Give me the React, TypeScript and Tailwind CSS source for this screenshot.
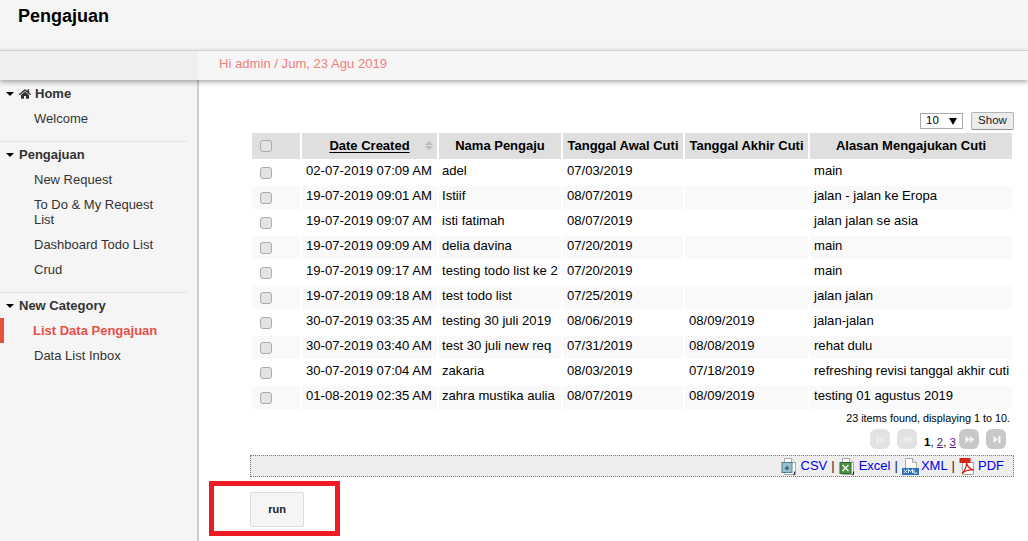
import { FaHome } from "react-icons/fa";

const rows = [
  ["02-07-2019 07:09 AM", "adel", "07/03/2019", "", "main"],
  ["19-07-2019 09:01 AM", "Istiif", "08/07/2019", "", "jalan - jalan ke Eropa"],
  ["19-07-2019 09:07 AM", "isti fatimah", "08/07/2019", "", "jalan jalan se asia"],
  ["19-07-2019 09:09 AM", "delia davina", "07/20/2019", "", "main"],
  ["19-07-2019 09:17 AM", "testing todo list ke 2", "07/20/2019", "", "main"],
  ["19-07-2019 09:18 AM", "test todo list", "07/25/2019", "", "jalan jalan"],
  ["30-07-2019 03:35 AM", "testing 30 juli 2019", "08/06/2019", "08/09/2019", "jalan-jalan"],
  ["30-07-2019 03:40 AM", "test 30 juli new req", "07/31/2019", "08/08/2019", "rehat dulu"],
  ["30-07-2019 07:04 AM", "zakaria", "08/03/2019", "07/18/2019", "refreshing revisi tanggal akhir cuti"],
  ["01-08-2019 02:35 AM", "zahra mustika aulia", "08/07/2019", "08/09/2019", "testing 01 agustus 2019"],
];

function Caret() {
  return <span className="mr-[5px] h-0 w-0 border-x-[4px] border-t-[4px] border-x-transparent border-t-black" />;
}

function NavGroup({ title, icon, children }: { title: string; icon?: boolean; children: React.ReactNode }) {
  return (
    <div>
      <div className="flex h-[25px] items-center pl-[6px] text-[#333]">
        <Caret />
        {icon && <FaHome className="mr-[4px] text-[12px] text-[#333]" />}
        <span className="text-[13px] font-bold">{title}</span>
      </div>
      {children}
    </div>
  );
}

function NavItem({ label, active }: { label: string; active?: boolean }) {
  return (
    <div className={`flex min-h-[25px] items-center py-[5px] pr-[28px] leading-[15px] ${active ? "border-l-4 border-[#e2513c] pl-[29px] font-bold text-[#e8504a]" : "pl-[34px] text-[#333]"}`}>
      {label}
    </div>
  );
}

function Checkbox() {
  return <span className="ml-[8px] block h-[12px] w-[12px] rounded-[3px] border border-[#ababab] bg-[#e4e4e4]" />;
}

function PageButton({ dir, double, dim }: { dir: "l" | "r"; double?: boolean; dim?: boolean }) {
  const tri = dir === "l" ? "M8 4 3 8l5 4z" : "M4 4l5 4-5 4z";
  const tri2 = dir === "l" ? "M13 4 8 8l5 4z" : "M9 4l5 4-5 4z";
  const bar = dir === "l" ? "M4 4h2.5v8H4z" : "M10.5 4H13v8h-2.5z";
  return (
    <span className={`flex h-[20px] w-[20px] items-center justify-center rounded-[6px] ${dim ? "bg-[#e2e2e2]" : "bg-[#c8c8c8]"}`}>
      <svg viewBox="0 0 17 16" className="h-[15px] w-[15px]" fill={dim ? "#eeeeee" : "#f6f6f6"}>
        {double ? (
          <>
            <path d={tri} />
            <path d={tri2} />
          </>
        ) : (
          <>
            <path d={dir === "l" ? "M12 4 7 8l5 4z" : "M5 4l5 4-5 4z"} />
            <path d={bar} />
          </>
        )}
      </svg>
    </span>
  );
}

function FileIcon({ kind }: { kind: "csv" | "xls" | "xml" | "pdf" }) {
  return (
    <svg viewBox="0 0 17 19" className="h-[19px] w-[17px] shrink-0">
      <path d="M3.5 1.5h7l4 4v12h-11z" fill="#fff" stroke="#a8a8a8" />
      <path d="M10.5 1.5v4h4" fill="#eee" stroke="#a8a8a8" />
      {kind === "csv" && (
        <>
          <rect x="1" y="5.5" width="10" height="10" fill="#9cc0cc" stroke="#4f8296" />
          <path d="M3.5 11.5 6 8.5l2.5 3-2.5 2z" fill="#3f7488" />
          <path d="M13.5 14.5v2.5l-1 1" stroke="#333" fill="none" strokeWidth="1.2" />
        </>
      )}
      {kind === "xls" && (
        <>
          <rect x="1" y="5.5" width="11" height="11" fill="#4d8f47" stroke="#2f6a2d" />
          <path d="m3.5 8 6 6M9.5 8l-6 6" stroke="#eaf4e6" strokeWidth="1.5" />
          <path d="M14.5 14.5v2.5l-1 1" stroke="#333" fill="none" strokeWidth="1.2" />
        </>
      )}
      {kind === "xml" && (
        <>
          <rect x="0" y="11" width="17" height="7" fill="#2f74c4" />
          <path d="M2 12.5l3 3.5M5 12.5l-3 3.5M6.5 16v-3.5l2 2 2-2V16M12 12.5V16h3" stroke="#fff" strokeWidth="0.9" fill="none" />
        </>
      )}
      {kind === "pdf" && (
        <>
          <rect x="0.5" y="1" width="11" height="5" fill="#d4261c" />
          <path d="M3 16.5c3-3 4.5-7 4.5-10.5 1 3.5 3 6 7 7-4-.5-8 .5-11.5 3.5z" fill="none" stroke="#d4261c" strokeWidth="1.3" />
        </>
      )}
    </svg>
  );
}

function ExportLink({ kind, label, gap }: { kind: "csv" | "xls" | "xml" | "pdf"; label: string; gap: string }) {
  return (
    <span className={`flex items-center text-[#0000ee] ${gap}`}>
      <FileIcon kind={kind} />
      {label}
    </span>
  );
}

export default function App() {
  return (
    <div className="relative flex h-[541px] w-[1028px] flex-col overflow-hidden bg-white font-['Liberation_Sans',Arial,sans-serif] text-[13px] text-black">
      <header className="h-[50px] bg-[#f5f5f5] pl-[18px] pt-[6px] text-[18px] leading-[21px] font-bold">Pengajuan</header>

      <div className="z-10 flex h-[30px] border-t border-[#d2d2d2] shadow-[0_2px_5px_rgba(0,0,0,0.35)]">
        <div className="w-[198px] bg-[#efefef]" />
        <div className="flex-1 bg-[#f6f6f6] pl-[21px] text-[13.1px] leading-[25px] text-[#f08080]">Hi admin / Jum, 23 Agu 2019</div>
      </div>

      <div className="flex min-h-0 flex-1">
        <aside className="w-[199px] shrink-0 border-r-2 border-[#cfcfcf] bg-[#f5f5f5] pt-[1px]">
          <NavGroup title="Home" icon>
            <NavItem label="Welcome" />
          </NavGroup>
          <div className="mt-[10px] w-[187px] border-t border-[#e4e4e4]" />
          <NavGroup title="Pengajuan">
            <NavItem label="New Request" />
            <NavItem label="To Do & My Request List" />
            <NavItem label="Dashboard Todo List" />
            <NavItem label="Crud" />
          </NavGroup>
          <div className="mt-[10px] w-[187px] border-t border-[#e4e4e4]" />
          <NavGroup title="New Category">
            <NavItem label="List Data Pengajuan" active />
            <NavItem label="Data List Inbox" />
          </NavGroup>
        </aside>

        <main className="min-w-0 flex-1 pl-[51px] pr-[14px] pt-[31px]">
          <div className="flex h-[20px] items-center justify-end gap-2 text-[11.5px]">
            <span className="flex h-[16px] w-[43px] items-center justify-between border border-[#a9a9a9] px-[5px]">
              10
              <span className="h-0 w-0 border-x-[4px] border-t-[7px] border-x-transparent border-t-black" />
            </span>
            <span className="flex h-[18px] w-[43px] items-center justify-center rounded-[2px] border border-[#b5b5b5] border-b-[#8f8f8f] bg-[#ececec] text-[#222]">Show</span>
          </div>

          <table className="w-[764px] table-fixed border-separate border-spacing-[2px]">
            <colgroup>
              <col className="w-[48px]" />
              <col className="w-[135px]" />
              <col className="w-[122px]" />
              <col className="w-[120px]" />
              <col className="w-[123px]" />
              <col />
            </colgroup>
            <thead>
              <tr className="h-[26px] bg-[#dfdfdf] text-center">
                <th><Checkbox /></th>
                <th className="relative font-bold underline underline-offset-2">
                  Date Created
                  <span className="absolute top-[8px] right-[4px] flex flex-col gap-[1px]">
                    <span className="h-0 w-0 border-x-[4px] border-b-[4px] border-x-transparent border-b-[#bcbcbc]" />
                    <span className="h-0 w-0 border-x-[4px] border-t-[4px] border-x-transparent border-t-[#bcbcbc]" />
                  </span>
                </th>
                <th className="font-bold">Nama Pengaju</th>
                <th className="font-bold">Tanggal Awal Cuti</th>
                <th className="font-bold">Tanggal Akhir Cuti</th>
                <th className="font-bold">Alasan Mengajukan Cuti</th>
              </tr>
            </thead>
            <tbody>
              {rows.map((r, i) => (
                <tr key={i} className="h-[23px]">
                  <td className={i % 2 ? "bg-[#f9f9f9]" : ""}><Checkbox /></td>
                  {r.map((c, j) => (
                    <td key={j} className={`overflow-visible whitespace-nowrap pb-[3px] text-[13.1px] leading-[16px] ${j === 1 ? "pl-[3px]" : "pl-[4px]"} ${i % 2 ? "bg-[#f9f9f9]" : ""}`}>{c}</td>
                  ))}
                </tr>
              ))}
            </tbody>
          </table>

          <div className="pr-[4px] text-right text-[10.8px] leading-[15px]">23 items found, displaying 1 to 10.</div>
          <div className="mt-[3px] flex h-[20px] items-start justify-end gap-[3px] pr-[8px] text-[11.5px]">
            <PageButton dir="l" dim />
            <span className="ml-[4px]"><PageButton dir="l" double dim /></span>
            <span className="ml-[4px] pt-[5px] leading-[16px]">
              <b>1</b>, <span className="text-[#551a8b] underline">2</span>, <span className="text-[#551a8b] underline">3</span>
            </span>
            <PageButton dir="r" double />
            <span className="ml-[4px]"><PageButton dir="r" /></span>
          </div>
          <div className="mt-[6px] flex h-[22px] w-[764px] items-center justify-end gap-[4px] border border-dotted border-[#777] bg-[#eeeeee] pr-[9px]">
            <ExportLink kind="csv" label="CSV" gap="gap-[3px]" />
            <span className="text-[#223]">|</span>
            <ExportLink kind="xls" label="Excel" gap="gap-[3px]" />
            <span className="text-[#223]">|</span>
            <ExportLink kind="xml" label="XML" gap="gap-[2px]" />
            <span className="text-[#223]">|</span>
            <ExportLink kind="pdf" label="PDF" gap="gap-[2px]" />
          </div>
          <button className="mt-[15px] block h-[35px] w-[54px] rounded-[2px] border border-[#dcdcdc] bg-[#f5f5f5] text-[11px] font-bold text-[#222]">run</button>
        </main>
      </div>

      <div className="absolute top-[481px] left-[209px] h-[55px] w-[131px] border-[5px] border-[#ed1c24]" />
    </div>
  );
}
